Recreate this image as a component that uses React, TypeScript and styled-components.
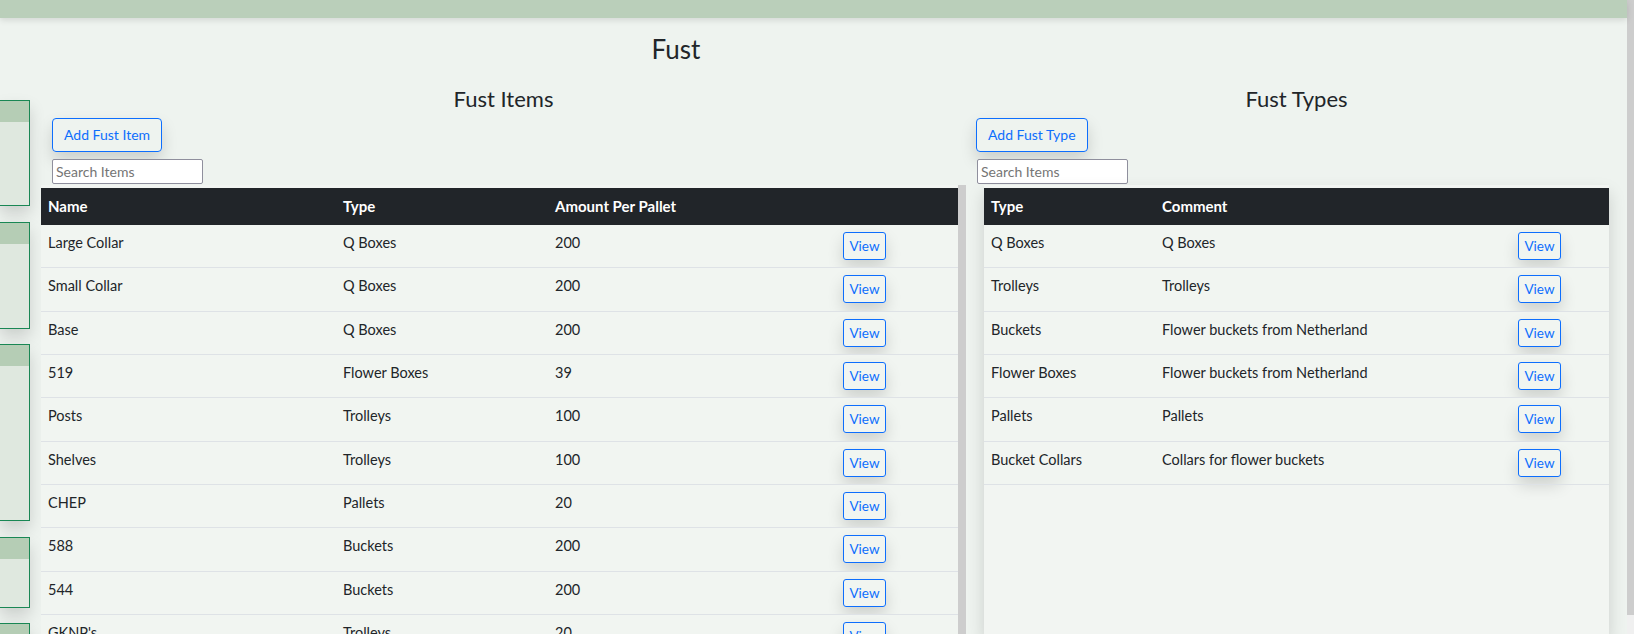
import React from 'react';
import styled, { createGlobalStyle } from 'styled-components';

const GlobalStyle = createGlobalStyle`
  html, body { margin: 0; padding: 0; height: 100%; overflow: hidden; }
  body {
    background: #eef3ef;
    font-family: Lato, "Open Sans", sans-serif;
    color: #212529;
  }
  #root { height: 100%; }
  *, *::before, *::after { box-sizing: border-box; }
`;

const Page = styled.div`
  display: flex;
  height: 634px;
  overflow: hidden;
`;

const Viewport = styled.div`
  flex: 1;
  min-width: 0;
  display: flex;
  flex-direction: column;
`;

const TopBar = styled.header`
  flex-shrink: 0;
  height: 18px;
  background: #bacfba;
  box-shadow: 0 2px 6px rgba(0, 0, 0, 0.12);
  position: relative;
  z-index: 2;
`;

const Body = styled.div`
  flex: 1;
  min-height: 0;
  display: flex;
`;

const Sidebar = styled.aside`
  flex-shrink: 0;
  width: 30px;
  padding-top: 82px;
  display: flex;
  flex-direction: column;
  gap: 15.5px;
`;

const Card = styled.div<{ $h: number }>`
  flex-shrink: 0;
  height: ${(p) => p.$h}px;
  background: #dfe8df;
  border: 1px solid #198754;
  border-left: none;
  box-shadow: 0 0.5rem 1rem rgba(0, 0, 0, 0.15);
`;

const CardHeader = styled.div`
  height: 21px;
  background: #b5cdb5;
`;

const Main = styled.main`
  flex: 1;
  min-width: 0;
  display: flex;
  flex-direction: column;
  padding: 16px 0 0 11px;
`;

const Title = styled.h1`
  margin: 0 316px 20.4px 0;
  font-size: 26px;
  line-height: 1.2;
  font-weight: 400;
  text-align: center;
`;

const Columns = styled.div`
  flex: 1;
  min-height: 0;
  display: grid;
  grid-template-columns: 925px 1fr;
`;

const Column = styled.section`
  min-height: 0;
  display: flex;
  flex-direction: column;
`;

const SectionHeading = styled.h2`
  margin: 0 0 6px;
  font-size: 22px;
  line-height: 1.2;
  font-weight: 400;
  text-align: center;
`;

const AddButton = styled.button<{ $indent: number }>`
  align-self: flex-start;
  margin-left: ${(p) => p.$indent}px;
  height: 34px;
  padding: 0 11px;
  border: 1px solid #0d6efd;
  border-radius: 4px;
  background: transparent;
  color: #0d6efd;
  font-family: Lato, "Open Sans", sans-serif;
  font-size: 14px;
  box-shadow: 0 0.5rem 1rem rgba(0, 0, 0, 0.15);
`;

const SearchInput = styled.input<{ $indent: number }>`
  align-self: flex-start;
  margin: 7px 0 0 ${(p) => p.$indent}px;
  width: 151px;
  height: 25px;
  padding: 0 3px;
  border: 1px solid #8f8f9d;
  border-radius: 2px;
  background: #fff;
  font-family: Lato, "Open Sans", sans-serif;
  font-size: 14px;
  color: #212529;
  &::placeholder { color: #757575; }
`;

const TableFrame = styled.div<{ $raised?: boolean }>`
  flex: 1;
  min-height: 0;
  display: flex;
  margin: 1px ${(p) => (p.$raised ? 18 : 0)}px 0;
  padding-top: 3px;
  background: #f2f5f2;
  box-shadow: ${(p) => (p.$raised ? '0 0.5rem 1rem rgba(0, 0, 0, 0.15)' : 'none')};
`;

const TableScroll = styled.div`
  flex: 1;
  min-width: 0;
  overflow: hidden;
`;

const ScrollTrack = styled.div`
  flex-shrink: 0;
  width: 8px;
  margin-top: -3px;
  background: #cdcdcd;
`;

const Table = styled.table`
  width: 100%;
  border-collapse: collapse;
  table-layout: fixed;
`;

const Col = styled.col<{ $w?: number }>`
  width: ${(p) => (p.$w ? `${p.$w}px` : 'auto')};
`;

const Th = styled.th`
  background: #212529;
  color: #fff;
  font-size: 15px;
  font-weight: 700;
  line-height: 24px;
  text-align: left;
  padding: 6px 7px 7px;
`;

const Td = styled.td`
  background: #f1f5f1;
  font-size: 14.5px;
  line-height: 24px;
  padding: 6px 7px 7.33px;
  vertical-align: top;
  border-bottom: 1px solid #dee2e6;
  white-space: nowrap;
`;

const ViewButton = styled.button`
  display: block;
  margin-top: 1px;
  width: 43px;
  height: 28px;
  padding: 0;
  border: 1px solid #0d6efd;
  border-radius: 3px;
  background: transparent;
  color: #0d6efd;
  font-family: Lato, "Open Sans", sans-serif;
  font-size: 13.5px;
  box-shadow: 0 0.5rem 1rem rgba(0, 0, 0, 0.15);
`;

const PageScrollbar = styled.div`
  flex-shrink: 0;
  width: 7px;
  display: flex;
  flex-direction: column;
  background: #f0f0f0;
`;

const PageThumb = styled.div`
  height: 615px;
  background: #cdcdcd;
`;

const items = [
  ['Large Collar', 'Q Boxes', '200'],
  ['Small Collar', 'Q Boxes', '200'],
  ['Base', 'Q Boxes', '200'],
  ['519', 'Flower Boxes', '39'],
  ['Posts', 'Trolleys', '100'],
  ['Shelves', 'Trolleys', '100'],
  ['CHEP', 'Pallets', '20'],
  ['588', 'Buckets', '200'],
  ['544', 'Buckets', '200'],
  ["GKNP's", 'Trolleys', '20'],
];

const types = [
  ['Q Boxes', 'Q Boxes'],
  ['Trolleys', 'Trolleys'],
  ['Buckets', 'Flower buckets from Netherland'],
  ['Flower Boxes', 'Flower buckets from Netherland'],
  ['Pallets', 'Pallets'],
  ['Bucket Collars', 'Collars for flower buckets'],
];

const cards = [106, 107, 177, 71, 60];

export default function App() {
  return (
    <>
      <GlobalStyle />
      <Page>
        <Viewport>
          <TopBar />
          <Body>
            <Sidebar>
              {cards.map((h, i) => (
                <Card key={i} $h={h}>
                  <CardHeader />
                </Card>
              ))}
            </Sidebar>
            <Main>
              <Title>Fust</Title>
              <Columns>
                <Column>
                  <SectionHeading>Fust Items</SectionHeading>
                  <AddButton $indent={11}>Add Fust Item</AddButton>
                  <SearchInput $indent={11} placeholder="Search Items" />
                  <TableFrame>
                    <TableScroll>
                      <Table>
                        <colgroup>
                          <Col $w={295} />
                          <Col $w={212} />
                          <Col $w={288} />
                          <Col />
                        </colgroup>
                        <thead>
                          <tr>
                            <Th>Name</Th>
                            <Th>Type</Th>
                            <Th>Amount Per Pallet</Th>
                            <Th />
                          </tr>
                        </thead>
                        <tbody>
                          {items.map(([name, type, amount], i) => (
                            <tr key={i}>
                              <Td>{name}</Td>
                              <Td>{type}</Td>
                              <Td>{amount}</Td>
                              <Td>
                                <ViewButton>View</ViewButton>
                              </Td>
                            </tr>
                          ))}
                        </tbody>
                      </Table>
                    </TableScroll>
                    <ScrollTrack />
                  </TableFrame>
                </Column>
                <Column>
                  <SectionHeading>Fust Types</SectionHeading>
                  <AddButton $indent={10}>Add Fust Type</AddButton>
                  <SearchInput $indent={11} placeholder="Search Items" />
                  <TableFrame $raised>
                    <TableScroll>
                      <Table>
                        <colgroup>
                          <Col $w={171} />
                          <Col $w={356} />
                          <Col />
                        </colgroup>
                        <thead>
                          <tr>
                            <Th>Type</Th>
                            <Th>Comment</Th>
                            <Th />
                          </tr>
                        </thead>
                        <tbody>
                          {types.map(([type, comment], i) => (
                            <tr key={i}>
                              <Td>{type}</Td>
                              <Td>{comment}</Td>
                              <Td>
                                <ViewButton>View</ViewButton>
                              </Td>
                            </tr>
                          ))}
                        </tbody>
                      </Table>
                    </TableScroll>
                  </TableFrame>
                </Column>
              </Columns>
            </Main>
          </Body>
        </Viewport>
        <PageScrollbar>
          <PageThumb />
        </PageScrollbar>
      </Page>
    </>
  );
}
